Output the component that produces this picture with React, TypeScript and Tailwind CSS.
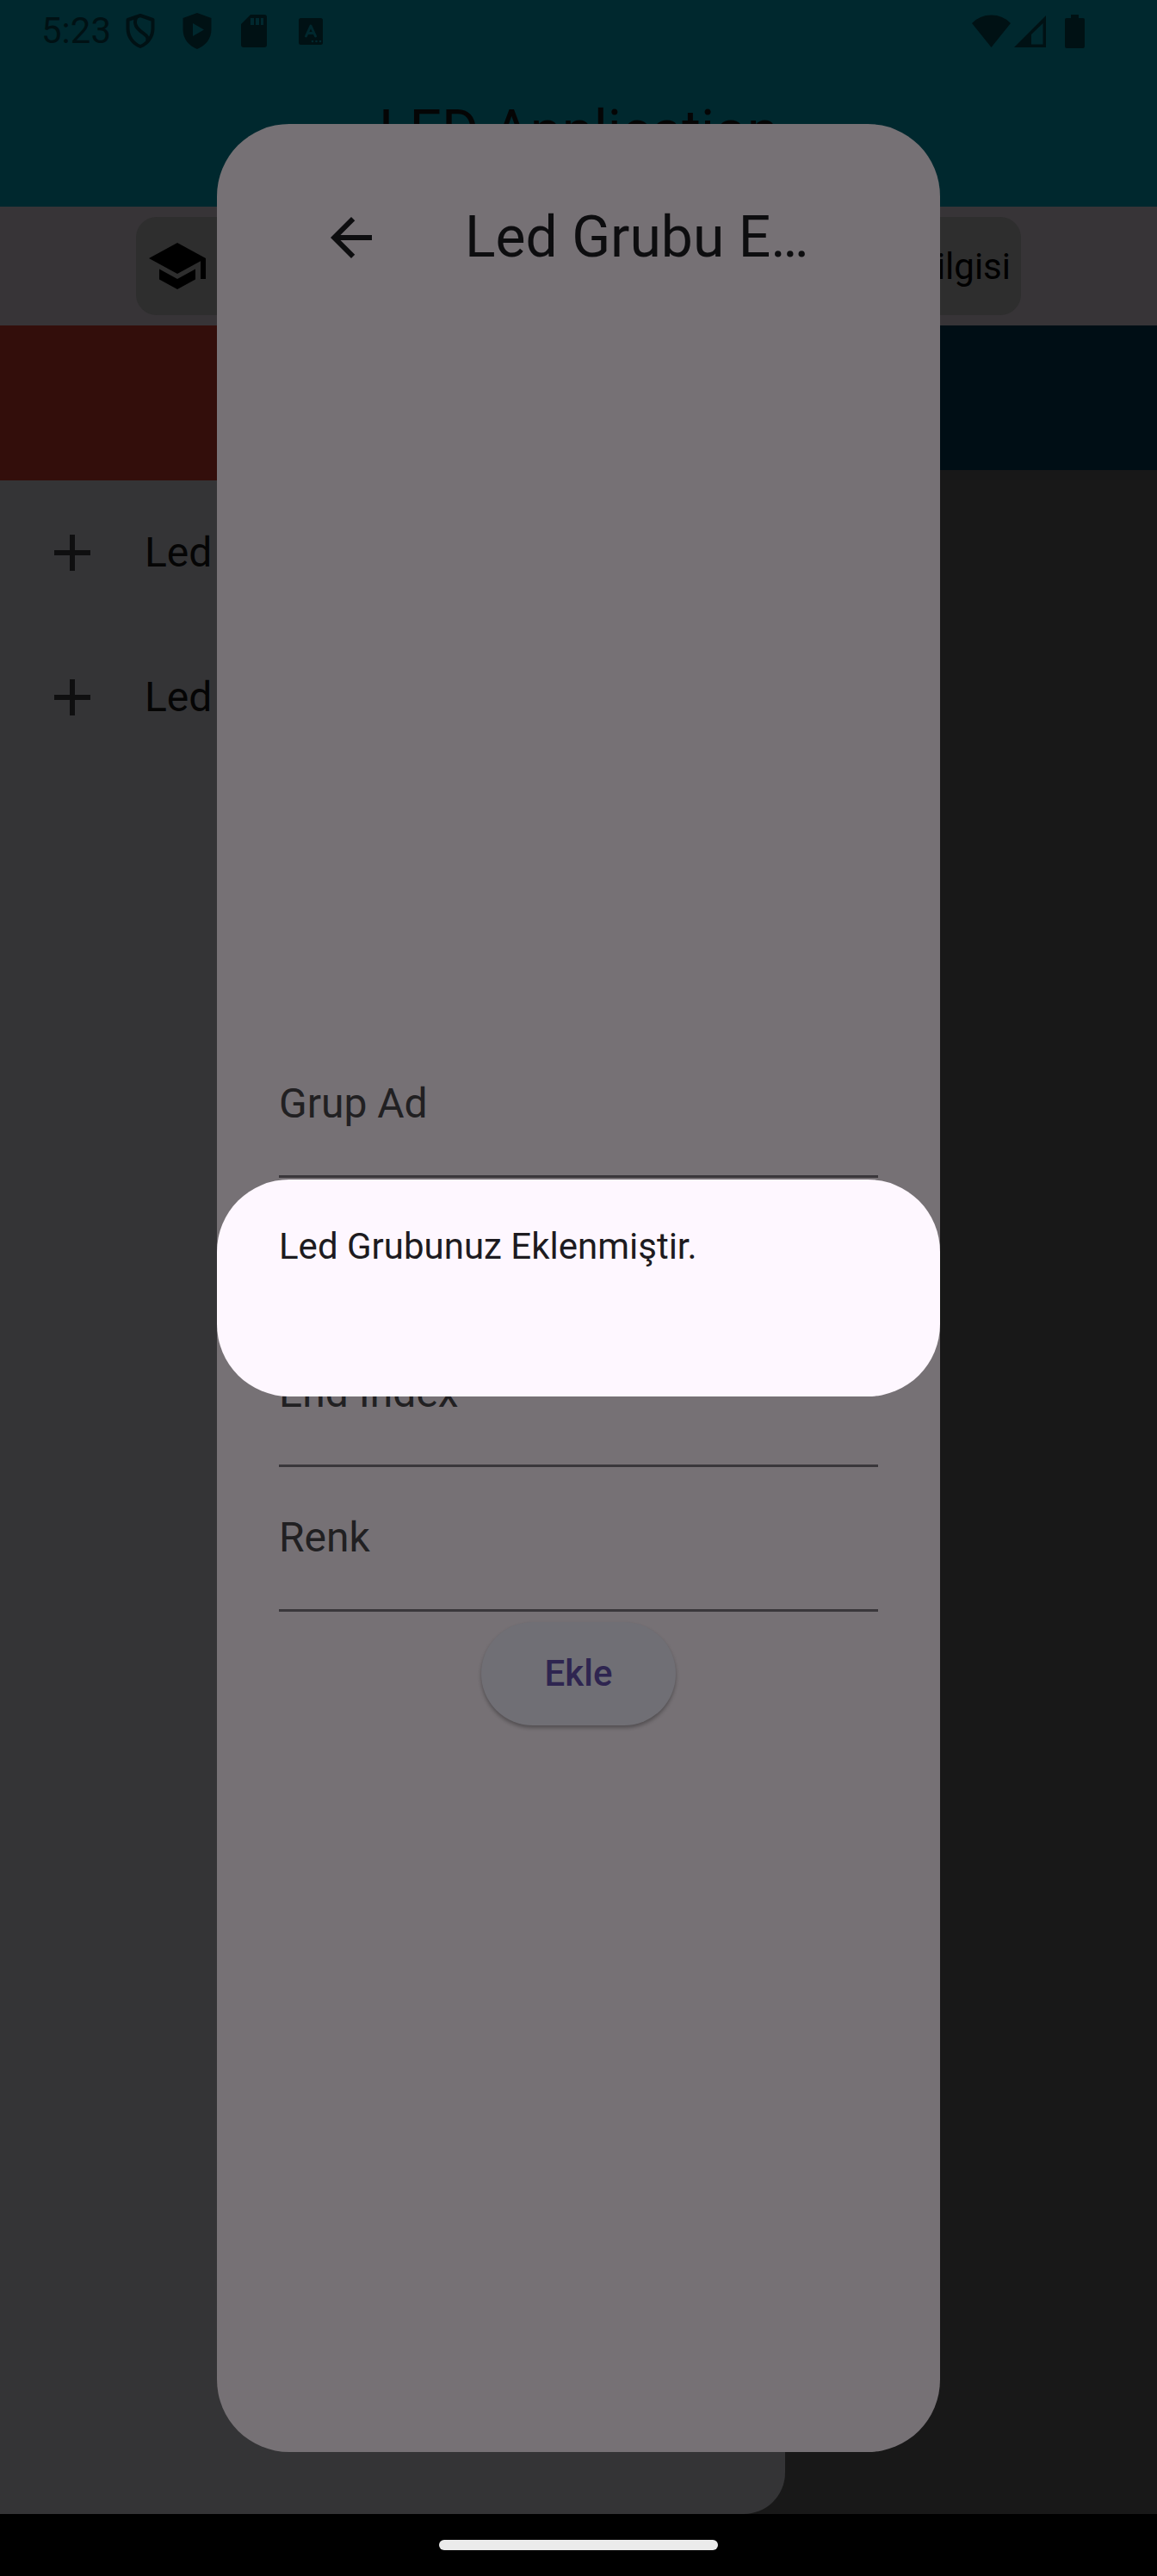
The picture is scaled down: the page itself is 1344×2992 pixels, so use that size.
import { MdAdd, MdArrowBack, MdSchool } from "react-icons/md";

function ShieldOutlineIcon() {
  return (
    <svg className="h-[42px] w-9" viewBox="0 0 36 42" fill="none" stroke="currentColor" strokeWidth="4" strokeLinejoin="round">
      <path d="M18 3 L32.500 8 V18 C32.500 28 26 36 18 39 C10 36 3.500 28 3.500 18 V8 Z" />
      <path d="M14 4 C10 11 12 16 18 21 C25 26 28 28 26 33" />
    </svg>
  );
}

function ShieldPlayIcon() {
  return (
    <svg className="h-[42px] w-9" viewBox="0 0 36 42" fill="currentColor" fillRule="evenodd">
      <path d="M18 0 L34.500 6 V19 C34.500 30 28 38 18 42 C8 38 1.500 30 1.500 19 V6 Z M13 12 V27 L26 19.500 Z" />
    </svg>
  );
}

function SdCardIcon() {
  return (
    <svg className="h-[42px] w-9" viewBox="0 0 36 42" fill="currentColor" fillRule="evenodd">
      <path d="M14 2 H30 Q33 2 33 5 V37 Q33 40 30 40 H6 Q3 40 3 37 V13 Z M14 6 V14 H18 V6 Z M20 6 V14 H24 V6 Z M26 6 V14 H29 V6 Z" />
    </svg>
  );
}

function LetterTileIcon() {
  return (
    <svg className="h-[42px] w-9 text-[#001114]" viewBox="0 0 36 42" fill="none">
      <rect x="4" y="6" width="28" height="31" rx="2.500" fill="currentColor" />
      <path d="M12.500 27 L18 15 L23.500 27 M14.500 23.500 H21.500" stroke="#00282e" strokeWidth="3" strokeLinecap="round" strokeLinejoin="round" />
      <circle cx="20" cy="33" r="1.300" fill="#00282e" />
      <circle cx="24.500" cy="33" r="1.300" fill="#00282e" />
      <circle cx="29" cy="33" r="1.300" fill="#00282e" />
    </svg>
  );
}

function StatusBar() {
  return (
    <div className="flex h-[72px] items-center justify-between pr-[84px] pl-12 text-[#001114]">
      <div className="flex items-center">
        <span className="mr-4 text-[42px] leading-[72px]">5:23</span>
        <div className="flex items-center gap-[30px]">
          <ShieldOutlineIcon />
          <ShieldPlayIcon />
          <SdCardIcon />
          <LetterTileIcon />
        </div>
      </div>
      <div className="flex items-center gap-1">
        <svg className="h-[42px] w-[45px]" viewBox="0 0 45 42" fill="currentColor">
          <path d="M22.500 40 L0 12 Q9 2.500 22.500 2.500 Q36 2.500 45 12 Z" />
        </svg>
        <svg className="h-[42px] w-[37px]" viewBox="0 0 37 42" fill="currentColor" fillRule="evenodd">
          <path d="M37 3 V40 H0 Z M33.500 12 L20 25 V36.500 H33.500 Z" />
        </svg>
        <svg className="ml-[18px] h-[42px] w-[23px]" viewBox="0 0 23 42" fill="currentColor">
          <path d="M7 2 H16 V6 H21 Q23 6 23 8 V38.500 Q23 41 21 41 H2 Q0 41 0 38.500 V8 Q0 6 2 6 H7 Z" />
        </svg>
      </div>
    </div>
  );
}

function DrawerItem() {
  return (
    <li>
      <button type="button" className="flex h-[168px] w-full items-center gap-12 px-12 text-left">
        <MdAdd className="size-[72px] text-[#0f0f10]" />
        <span className="text-[48px] leading-[72px] text-[#050505]">Led</span>
      </button>
    </li>
  );
}

function AppScreen() {
  return (
    <div className="flex min-h-screen flex-col bg-[#181818]">
      <header className="bg-[#00282e]">
        <StatusBar />
        <h1 className="flex h-[168px] items-center justify-center pb-2 text-[66px] text-[#050505]">LED Application</h1>
      </header>
      <div className="flex h-[138px] items-center justify-center bg-[#373437] px-[158px]">
        <button type="button" className="flex h-[114px] w-full items-center justify-between rounded-3xl bg-[#2e2e2e] px-3 text-[42px] text-black">
          <MdSchool className="size-[72px]" />
          <span>Bilgisi</span>
        </button>
      </div>
      <div className="flex flex-1">
        <aside className="w-[912px] rounded-br-[48px] bg-[#343436]">
          <div className="h-[180px] bg-[#330e0b]" />
          <ul>
            <DrawerItem />
            <DrawerItem />
          </ul>
        </aside>
        <main className="flex-1">
          <div className="h-[168px] bg-[#000e15]" />
        </main>
      </div>
      <footer className="flex h-[72px] items-center justify-center bg-black">
        <div className="h-3 w-[324px] rounded-full bg-[#ebebeb]" />
      </footer>
    </div>
  );
}

const fields = ["Grup Ad", "Start Index", "End Index", "Renk"];

function GroupDialog() {
  return (
    <div role="dialog" aria-label="Led Grubu" className="flex h-full w-5/8 flex-col rounded-[84px] bg-[#767175] px-[72px] pt-12">
      <div className="flex h-[168px] items-center gap-12">
        <button type="button" aria-label="Geri" className="flex w-[168px] shrink-0 justify-center text-[#0d0d0f]">
          <MdArrowBack className="size-[72px]" />
        </button>
        <h2 className="whitespace-nowrap text-[66px] leading-[84px] text-[#0d0d0f]">Led Grubu E…</h2>
      </div>
      <form className="flex flex-1 flex-col items-center justify-center pt-2">
        {fields.map((name) => (
          <input
            key={name}
            type="text"
            aria-label={name}
            placeholder={name}
            className="h-[168px] w-full border-b-3 border-[#3a373b] bg-transparent pb-0.5 text-[48px] text-[#212022] outline-none placeholder:text-[#212022]"
          />
        ))}
        <button
          type="button"
          className="my-3 h-[120px] rounded-full bg-[#706f75] px-[74px] pb-0.5 text-[42px] font-medium text-[#2e2550] shadow-[0_3px_4px_rgba(0,0,0,0.3)]"
        >
          Ekle
        </button>
      </form>
    </div>
  );
}

export default function App() {
  return (
    <div className="relative font-[Roboto,sans-serif]">
      <AppScreen />
      <div className="absolute inset-0 flex justify-center py-36">
        <GroupDialog />
      </div>
      <div className="absolute inset-0 flex items-center justify-center">
        <div role="alertdialog" aria-label="Bilgi" className="w-5/8 rounded-[84px] bg-[#fef7ff] px-[72px] pt-12 pb-36">
          <p className="text-[42px] leading-[60px] text-[#1d1b20]">Led Grubunuz Eklenmiştir.</p>
        </div>
      </div>
    </div>
  );
}
